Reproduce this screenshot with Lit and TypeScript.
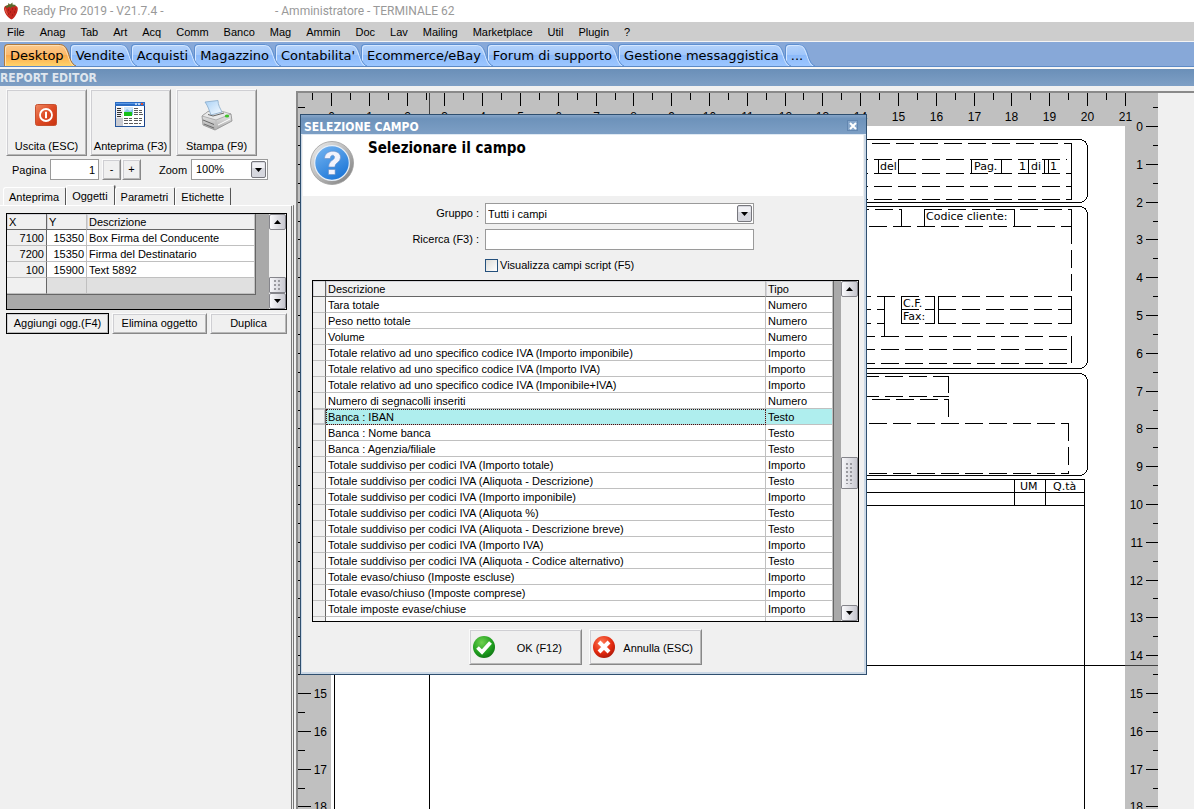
import { LitElement, html, css, svg } from "lit";
import { customElement, property, state } from "lit/decorators.js";
import { classMap } from "lit/directives/class-map.js";

const MENU = ["File", "Anag", "Tab", "Art", "Acq", "Comm", "Banco", "Mag", "Ammin", "Doc", "Lav", "Mailing", "Marketplace", "Util", "Plugin", "?"];
const TABS = ["Desktop", "Vendite", "Acquisti", "Magazzino", "Contabilita'", "Ecommerce/eBay", "Forum di supporto", "Gestione messaggistica", "..."];
const PANEL_TABS = ["Anteprima", "Oggetti", "Parametri", "Etichette"];
const OBJECTS = [
  [7100, 15350, "Box Firma del Conducente"],
  [7200, 15350, "Firma del Destinatario"],
  [100, 15900, "Text 5892"],
];
const FIELDS = [
  ["Tara totale", "Numero"],
  ["Peso netto totale", "Numero"],
  ["Volume", "Numero"],
  ["Totale relativo ad uno specifico codice IVA (Importo imponibile)", "Importo"],
  ["Totale relativo ad uno specifico codice IVA (Importo IVA)", "Importo"],
  ["Totale relativo ad uno specifico codice IVA (Imponibile+IVA)", "Importo"],
  ["Numero di segnacolli inseriti", "Numero"],
  ["Banca : IBAN", "Testo"],
  ["Banca : Nome banca", "Testo"],
  ["Banca : Agenzia/filiale", "Testo"],
  ["Totale suddiviso per codici IVA (Importo totale)", "Importo"],
  ["Totale suddiviso per codici IVA (Aliquota - Descrizione)", "Testo"],
  ["Totale suddiviso per codici IVA (Importo imponibile)", "Importo"],
  ["Totale suddiviso per codici IVA (Aliquota %)", "Testo"],
  ["Totale suddiviso per codici IVA (Aliquota - Descrizione breve)", "Testo"],
  ["Totale suddiviso per codici IVA (Importo IVA)", "Importo"],
  ["Totale suddiviso per codici IVA (Aliquota - Codice alternativo)", "Testo"],
  ["Totale evaso/chiuso (Imposte escluse)", "Importo"],
  ["Totale evaso/chiuso (Imposte comprese)", "Importo"],
  ["Totale imposte evase/chiuse", "Importo"],
  ["Totale da evadere/chiudere (Imposte escluse)", "Importo"],
];

const base = css`
  * { box-sizing: border-box; }
  button, input, select { font: inherit; color: inherit; margin: 0; border-radius: 0; }
  button { cursor: default; }
`;

/* ---------- icons ---------- */

const strawberry = html`<svg class="berry" width="16" height="18" viewBox="0 0 16 18" aria-hidden="true">
  <path d="M1 7C1 4 3 3.200 5 3.600C7 3 10 3 12 3.800C14.500 4 15.300 6 14.600 8.500C14 12 11 16.500 8.500 17.500C6.500 17 1.500 12 1 7Z" fill="#c3261d"/>
  <path d="M3 6c0 4 2 7 5 9-4-2-6-5-6-8z" fill="#e4604c"/>
  <path d="M2 4.500L5 3 5.500 1 7 2.500 9.500 0.500 9.500 2.500 13 3 11 5 9 4.500 7.500 6.500 6.500 4.600 4 6z" fill="#5a6a2c"/>
  <path d="M5 8h1M9 7h1M12 7h1M7 10h1M11 10h1M5 12h1M9 13h1" stroke="#8b120f"/>
</svg>`;

const powerIcon = html`<svg width="32" height="32" viewBox="0 0 32 32" aria-hidden="true">
  <defs><linearGradient id="pw" x1="0" y1="0" x2="1" y2="1"><stop offset="0" stop-color="#f08a63"/><stop offset=".5" stop-color="#dd4a24"/><stop offset="1" stop-color="#c93310"/></linearGradient></defs>
  <rect x="4.500" y="5.500" width="21" height="21" rx="2" fill="url(#pw)" stroke="#c6502f"/>
  <circle cx="15" cy="16" r="6" fill="none" stroke="#fff" stroke-width="1.800"/>
  <path d="M15 12.800v6.400" stroke="#fff" stroke-width="2"/>
</svg>`;

const previewIcon = html`<svg width="32" height="32" viewBox="0 0 32 32" aria-hidden="true">
  <rect x=".5" y="3.500" width="29" height="24" fill="#fff" stroke="#24559b"/>
  <path d="M0 3h30v4H0z" fill="#2a6cc4"/><path d="M1 4h28v1H1z" fill="#5c9ae6"/>
  <path d="M20 4h2v2h-2zM23 4h2v2h-2z" fill="#b9d3f3"/><path d="M26 4h2v2h-2z" fill="#e0522f"/>
  <path d="M1 8h7v11H1z" fill="#f0f0f3"/><path d="M2 9.500h4M2 11.500h4M2 13.500h5M2 15.500h4M2 17.500h4" stroke="#333"/>
  <path d="M1 19h7v8H1z" fill="#c9cbd2"/>
  <path d="M9 8h9v6h-9z" fill="#cfe6fb"/><path d="M9 13l3-3 3 2 3-2v6h-9z" fill="#8ac4e9"/><path d="M9 13h8v4h-8z" fill="#17c01a"/>
  <path d="M19 9.500h5M19 11.500h8M19 13.500h8M19 15.500h9M9 19.500h8M19 19.500h8M9 21.500h8M19 21.500h8M9 24.500h17" stroke="#5a5a5a" stroke-dasharray="4 1"/>
  <path d="M29.500 7v20" stroke="#173f86"/>
</svg>`;

const printerIcon = html`<svg width="36" height="34" viewBox="0 0 36 34" aria-hidden="true">
  <defs><linearGradient id="pp" x1="0" y1="0" x2="1" y2="1"><stop offset="0" stop-color="#a9d1f6"/><stop offset="1" stop-color="#f6fbff"/></linearGradient>
  <linearGradient id="pb" x1="0" y1="0" x2="0" y2="1"><stop offset="0" stop-color="#f4f4f4"/><stop offset="1" stop-color="#a9a9a9"/></linearGradient></defs>
  <path d="M3 17L10 12 32 15 33 22 16 31 4 26z" fill="url(#pb)" stroke="#8d8d8d" stroke-width=".8"/>
  <path d="M3 17L17 21 32 15 24 12.500 9 12.500z" fill="#e9e9e9" stroke="#9a9a9a" stroke-width=".7"/>
  <path d="M6 3L19 1.500C19 6 21 9 23 13L12 16C10 11 9 7 6 3z" fill="url(#pp)" stroke="#86a9c9" stroke-width=".8"/>
  <path d="M9 15.500l5 1.500 11-3" fill="none" stroke="#666"/>
  <path d="M17 21v9.500" stroke="#bdbdbd"/><path d="M4 21l11 4.500M5 25l10 4" stroke="#696969"/>
  <path d="M19 26l12-6" stroke="#fff"/><ellipse cx="28" cy="17" rx="2.200" ry="1.500" fill="#3fc22a"/>
</svg>`;

const helpIcon = html`<svg width="46" height="46" viewBox="0 0 46 46" aria-hidden="true">
  <defs><linearGradient id="hr" x1="0" y1="0" x2="1" y2="1"><stop offset="0" stop-color="#f2f2f2"/><stop offset=".5" stop-color="#b9b9b9"/><stop offset="1" stop-color="#777"/></linearGradient>
  <linearGradient id="hb" x1="0" y1="0" x2=".6" y2="1"><stop offset="0" stop-color="#79b7f2"/><stop offset="1" stop-color="#1f78d8"/></linearGradient></defs>
  <circle cx="23" cy="23" r="21.500" fill="url(#hr)" stroke="#9d9d9d" stroke-width=".8"/>
  <circle cx="23" cy="23" r="17.300" fill="url(#hb)" stroke="#e6eef7" stroke-width="1.200"/>
  <path d="M15.500 18.500C15.500 9 32 9 31.500 17.500C31.300 22.500 26 22.500 25.800 27H19.700C19.500 20.500 25.500 20.500 25.500 17.300C25.500 14.300 21.400 14.500 21.200 18.500z" fill="#f3f3fc" stroke="#6d8fc4" stroke-width=".6"/>
  <rect x="19.500" y="29.500" width="6.600" height="5" fill="#f3f3fc" stroke="#6d8fc4" stroke-width=".6"/>
</svg>`;

const okIcon = html`<svg width="24" height="24" viewBox="0 0 24 24" aria-hidden="true">
  <defs><radialGradient id="og" cx=".4" cy=".3" r=".8"><stop offset="0" stop-color="#6fd24f"/><stop offset=".6" stop-color="#1f9e1f"/><stop offset="1" stop-color="#0c6b12"/></radialGradient></defs>
  <circle cx="12" cy="12" r="11" fill="url(#og)"/><path d="M5.500 12.500l4.500 4.500L18.500 7.500" fill="none" stroke="#fff" stroke-width="3.800"/>
</svg>`;

const cancelIcon = html`<svg width="24" height="24" viewBox="0 0 24 24" aria-hidden="true">
  <defs><radialGradient id="cg" cx=".4" cy=".3" r=".8"><stop offset="0" stop-color="#ff7a55"/><stop offset=".6" stop-color="#e2290f"/><stop offset="1" stop-color="#9d1408"/></radialGradient></defs>
  <circle cx="12" cy="12" r="11" fill="url(#cg)"/><path d="M7 7l10 10M17 7l-10 10" stroke="#fff" stroke-width="4"/>
</svg>`;

/* ---------- scrollbar ---------- */

@customElement("rp-scrollbar")
class RpScrollbar extends LitElement {
  @property({ type: Number }) thumbStart = 0;
  @property({ type: Number }) thumbSize = 20;

  static styles = [base, css`
    :host { display: flex; flex-direction: column; width: 17px; background: #f0f0f0; }
    button { flex: none; height: 16px; padding: 0; display: grid; place-items: center; border: 1px solid #85858b; border-radius: 2px;
      background: linear-gradient(90deg, #fbfbfd, #c6c6ce); }
    .track { flex: 1; display: flex; flex-direction: column; min-height: 0; }
    .thumb { flex: none; display: grid; place-items: center; border: 1px solid #85858b; border-radius: 1px; background: linear-gradient(90deg, #f6f6f9, #c9c9d1); }
    .grip { width: 8px; height: 70%; background: radial-gradient(circle at 1px 1px, #9a9aa0 1px, transparent 1px) 0 0 / 4px 4px; }
  `];

  render() {
    return html`
      <button aria-label="Su"><svg width="7" height="4"><path d="M3.500 0L7 4H0z"/></svg></button>
      <div class="track">
        <div style="height:${this.thumbStart}%"></div>
        <div class="thumb" style="height:${this.thumbSize}px"><div class="grip"></div></div>
      </div>
      <button aria-label="Giù"><svg width="7" height="4"><path d="M0 0H7L3.500 4z"/></svg></button>`;
  }
}

/* ---------- report page with rulers ---------- */

const CM = 37.8;
const PAGE_CM = 29;
// Dashed edges: y, x of the first dash, x of the end.
const DASH_H = [
  [17, 517, 740], [33, 519, 735], [47, 519, 740], [60, 519, 740], [73, 519, 740],
  [83, 520, 570], [83, 593, 740], [100, 514, 740],
  [170, 522, 571], [183, 522, 553], [197, 522, 553],
  [170, 570, 603], [183, 570, 603], [197, 570, 603],
  [170, 607, 740], [183, 607, 740], [197, 607, 740],
  [210, 526, 740], [223, 526, 740], [237, 526, 740],
  [250, 530, 617], [270, 530, 617], [273, 517, 617],
  [297, 514, 737], [347, 514, 737],
];
// Dashed edges: x, top, bottom.
const DASH_V = [
  [740, 100, 165], [617, 250, 267], [617, 273, 291], [737, 297, 348],
];
// Solid vertical edges: x, top, bottom.
const SOLID_V = [
  [740, 17, 73], [547, 33, 47], [567, 33, 47], [640, 33, 47], [670, 33, 47], [697, 33, 47], [713, 33, 47], [717, 33, 47],
  [570, 83, 100], [593, 83, 100], [683, 83, 100], [740, 83, 100],
  [553, 170, 210], [570, 170, 197], [603, 170, 197], [607, 170, 197], [740, 170, 197], [740, 210, 236],
  [683, 353, 379], [714, 353, 379], [753, 353, 1100], [3, 353, 1100], [98, 0, 1100],
];
const LABELS: [number, number, string][] = [
  [549, 44, "del"], [643, 44, "Pag."], [688, 44, "1"], [700, 44, "di"], [719, 44, "1"],
  [595, 94, "Codice cliente:"], [572, 181, "C.F."], [572, 194, "Fax:"],
  [689, 364, "UM"], [722, 364, "Q.tà"],
];

@customElement("rp-report-canvas")
class RpReportCanvas extends LitElement {
  @state() private visibleCm = 0;

  private observer = new ResizeObserver(([entry]) => {
    this.visibleCm = Math.min(PAGE_CM, Math.floor((entry.contentRect.height - 28) / CM));
  });

  connectedCallback() {
    super.connectedCallback();
    this.observer.observe(this);
  }

  disconnectedCallback() {
    this.observer.disconnect();
    super.disconnectedCallback();
  }

  static styles = [base, css`
    :host { display: block; min-width: 0; overflow: hidden; border-top: 2px solid #8a8a8a; border-left: 2px solid #8a8a8a; }
    svg { display: block; height: 100%; }
    .ruler { fill: #c0c0c0; }
    .sheet { fill: #fff; }
    .line { stroke: #000; fill: none; }
    .dash { stroke: #000; stroke-dasharray: 18 6; }
    .guide { stroke: #404040; }
    .num { font: 12px "Liberation Sans", sans-serif; }
    .mid { text-anchor: middle; }
    .end { text-anchor: end; }
    .label { font: 11px "DejaVu Sans", sans-serif; }
  `];

  private hTick(i: number) {
    const x = Math.round((i * CM) / 2) + 0.5;
    const major = i % 2 === 0;
    return svg`<path class="line" d="M${x} -33V${major ? -20 : -26}"/>
      ${major && i >= 0 ? svg`<text class="num mid" x=${x} y="-5">${i / 2}</text>` : ""}`;
  }

  private vTick(i: number) {
    const y = Math.round((i * CM) / 2) + 0.5;
    const major = i % 2 === 0;
    return svg`<path class="line" d="M-33 ${y}H${major ? -20 : -26}M${major ? 815 : 822} ${y}H827"/>
      ${major ? svg`<text class="num end" x="-4" y=${y + 4}>${i / 2}</text><text class="num end" x="812" y=${y + 4}>${i / 2}</text>` : ""}`;
  }

  render() {
    return html`<svg width="860" shape-rendering="crispEdges" role="img" aria-label="Report">
      <rect class="ruler" width="860" height="100%"/>
      <g transform="translate(33 33)">
        <rect class="sheet" width="794" height="1120"/>
        ${Array.from({ length: 44 }, (_, k) => this.hTick(k - 1))}
        ${Array.from({ length: this.visibleCm * 2 + 2 }, (_, k) => this.vTick(k - 1))}
        <path class="guide" d="M98.500 -33V0M-33 539.500H0M794 539.500H827"/>
        ${[[13, 63], [80, 162], [247, 102]].map(([y, h]) => svg`<rect class="line" x="3.500" y=${y + 0.5} width="753" height=${h} rx="8"/>`)}
        ${DASH_H.map(([y, a, b]) => svg`<path class="dash" d="M${a} ${y + 0.5}H${b + 1}"/>`)}
        ${DASH_V.map(([x, a, b]) => svg`<path class="dash" d="M${x + 0.5} ${a}V${b}"/>`)}
        ${SOLID_V.map(([x, a, b]) => svg`<path class="line" d="M${x + 0.5} ${a}V${b + 1}"/>`)}
        <path class="line" d="M3 353.500H753M3 366.500H753M3 379.500H753M0 539.500H794"/>
        ${LABELS.map(([x, y, t]) => svg`<text class="label" x=${x} y=${y}>${t}</text>`)}
      </g>
    </svg>`;
  }
}

/* ---------- field selection dialog ---------- */

@customElement("rp-field-dialog")
class RpFieldDialog extends LitElement {
  @state() private selected = 7;

  static styles = [base, css`
    :host { display: block; border: 1px solid #2f4f6f; background: #f0f0f0; box-shadow: inset -2px -2px 0 #cbd8e6, inset 1px 0 0 #cbd8e6; }
    .title { display: flex; align-items: center; justify-content: space-between; height: 20px; padding: 5px 8px 0 3px;
      background: linear-gradient(#86a5c8, #6d92ba 20%, #7d9fc5); border-bottom: 1px solid #dfe9f3; color: #fff;
      font: bold 12px/14px "DejaVu Sans Condensed", "DejaVu Sans", sans-serif; }
    .close { width: 11px; height: 11px; margin-bottom: 3px; padding: 0; border: 1px solid #6286b0; background: #86a6ca; display: grid; place-items: center; }
    .head { display: flex; gap: 13px; height: 61px; margin: 0 3px 0 2px; padding: 5px 6px; background: #fff; }
    h1 { margin: 0; font: bold 15px/16px "DejaVu Sans Condensed", "DejaVu Sans", sans-serif; }
    .form { display: grid; grid-template-columns: 178px 269px; column-gap: 6px; row-gap: 5px; padding-top: 7px; align-items: center; }
    .form label { text-align: right; }
    .box { display: block; width: 100%; height: 21px; padding: 1px 2px 0; border: 1px solid #9a9a9a; background: #fff; appearance: none; outline: none; }
    .combo { position: relative; }
    .arrow { position: absolute; right: 2px; top: 2px; pointer-events: none; }
    .check { grid-column: 2; display: flex; align-items: center; gap: 2px; height: 21px; }
    .check input { appearance: none; width: 13px; height: 13px; border: 1px solid #24507c; background: linear-gradient(135deg, #dcdcd8, #fff); }
    .grid { display: flex; height: 342px; margin: 4px 7px 0 11px; border: 1px solid #000; background: #a9a9a9; overflow: hidden; }
    .rows { flex: 1; min-width: 0; overflow: hidden; padding-right: 7px; }
    table { width: 100%; border-collapse: separate; border-spacing: 0; table-layout: fixed; border-right: 1px solid #666; }
    th, td { height: 16px; padding: 1px 2px 0; line-height: 14px; text-align: left; font-weight: normal; white-space: nowrap; overflow: hidden;
      border-right: 1px solid #c0c0c0; border-bottom: 1px solid #c0c0c0; background: #fff; }
    th { background: #f0f0f0; border-bottom-color: #666; box-shadow: inset 1px 1px 0 #d4d4da; }
    .gutter { width: 13px; padding: 0; background: #f0f0f0; border-right-color: #666; }
    .type { width: 67px; }
    .sel td { background: #afeeee; }
    .sel td.gutter { background: #f0f0f0; box-shadow: inset 0 0 0 1px #c4c4c8; }
    .sel td.name { outline: 1px dotted #401010; outline-offset: -1px; }
    .actions { display: flex; justify-content: center; gap: 7px; padding: 7px 0 9px 4px; }
    .act { display: flex; align-items: center; width: 113px; height: 36px; padding: 0 8px 0 2px; border: 1px solid #fafafa; border-right: 1px solid #888; border-bottom: 1px solid #888;
      background: #f0f0f0; box-shadow: inset 1px 1px 0 #cfcfd3, inset -1px -1px 0 #b8b8b8; }
    .act span { flex: 1; text-align: right; padding-top: 3px; }
    .act.ok { padding-right: 19px; }
    .act svg { flex: none; }
  `];

  render() {
    return html`
      <div class="title"><span>SELEZIONE CAMPO</span>
        <button class="close" aria-label="Chiudi"><svg width="8" height="8"><path d="M1 1l6 6M7 1L1 7" stroke="#fff" stroke-width="2"/></svg></button></div>
      <div class="head">${helpIcon}<h1>Selezionare il campo</h1></div>
      <div class="form">
        <label for="gruppo">Gruppo :</label>
        <div class="combo"><select id="gruppo" class="box"><option>Tutti i campi</option></select>${comboArrow}</div>
        <label for="ricerca">Ricerca (F3) :</label>
        <input id="ricerca" class="box" type="text">
        <div class="check"><input id="script" type="checkbox"><label for="script">Visualizza campi script (F5)</label></div>
      </div>
      <div class="grid">
        <div class="rows"><table>
          <thead><tr><th class="gutter"></th><th>Descrizione</th><th class="type">Tipo</th></tr></thead>
          <tbody>${FIELDS.map(([name, type], i) => html`
            <tr class=${classMap({ sel: i === this.selected })} @click=${() => (this.selected = i)}>
              <td class="gutter"></td><td class="name">${name}</td><td>${type}</td></tr>`)}
          </tbody></table></div>
        <rp-scrollbar .thumbStart=${52} .thumbSize=${32}></rp-scrollbar>
      </div>
      <div class="actions">
        <button class="act ok">${okIcon}<span>OK (F12)</span></button>
        <button class="act">${cancelIcon}<span>Annulla (ESC)</span></button>
      </div>`;
  }
}

const comboArrow = html`<svg class="arrow" width="15" height="17" viewBox="0 0 15 17" aria-hidden="true">
  <rect x=".5" y=".5" width="14" height="16" rx="1.500" fill="#d6d7de" stroke="#77777d"/>
  <path d="M1.500 2h12v5h-12z" fill="#f1f1f5"/><path d="M4 7h7l-3.500 4z"/></svg>`;

/* ---------- application shell ---------- */

@customElement("app-root")
class AppRoot extends LitElement {
  @state() private tab = 0;
  @state() private panelTab = 1;

  static styles = [base, css`
    :host { display: flex; flex-direction: column; height: 100vh; overflow: hidden; position: relative; background: #f0f0f0; color: #000;
      font: 11px/15px "Liberation Sans", sans-serif; }
    .caption { flex: none; display: flex; align-items: center; height: 22px; padding-left: 3px; background: #fff; color: #999; font: 12px/16px Roboto, sans-serif; }
    .caption span { width: 256px; padding-left: 4px; }
    .caption .user { padding: 0; width: auto; }
    .menu { flex: none; display: flex; align-items: center; height: 20px; background: #cdcdcd; border-bottom: 1px solid #f4f4f4; }
    .menu button { padding: 1px 8px 0 7px; border: 0; background: none; }
    .tabs { flex: none; display: flex; height: 25px; padding: 2px 0 0 4px; background: #87a8d8; border-bottom: 1px solid #5d8ac6; }
    .tab { position: relative; isolation: isolate; flex: none; padding: 0 6px; border: 0; background: none; font: 13px/21px "DejaVu Sans", sans-serif; }
    .tab::before { content: ""; position: absolute; z-index: -1; inset: 0 11px 0 0; border: 1px solid #5e8fd0; border-width: 1px 0 0 1px; border-radius: 4px 0 0 0;
      background: linear-gradient(#b5d3fa, #9ec5fb 50%, #8cbafa 50%, #9cc6ff); box-shadow: inset 1px 1px 0 #d5e7ff; }
    .tab svg { position: absolute; z-index: -1; right: -6px; top: 0; }
    .tab .fill { fill: url(#tabBlue); }
    .tab .edge { fill: none; stroke: #5e8fd0; }
    .tab .shine { fill: none; stroke: #d5e7ff; }
    .tab.on::before { border-color: #b07a3c; background: linear-gradient(#fbc98c, #fdb868 50%, #fba94b 50%, #ffd36b); box-shadow: inset 1px 1px 0 #ffe0b4; }
    .tab.on .fill { fill: url(#tabOrange); }
    .tab.on .edge { stroke: #9a6b3a; }
    .tab.on .shine { stroke: #ffe0b4; }
    .heading { flex: none; height: 19px; margin: 0; border-top: 2px solid #f6f6f6; background: linear-gradient(#6a8fb8, #7e9fc5); color: #dfe6ee;
      font: bold 12px/19px "DejaVu Sans Condensed", "DejaVu Sans", sans-serif; }
    .work { flex: 1; min-height: 0; display: flex; padding-top: 5px; gap: 2px; }
    .side { flex: none; width: 294px; display: flex; flex-direction: column; }
    .big { display: flex; gap: 3px; height: 67px; padding-left: 6px; margin-top: -2px; }
    .raised { border: 1px solid #fafafa; border-right-color: #888; border-bottom-color: #888; background: #f0f0f0; padding: 0;
      box-shadow: inset 1px 1px 0 #cfcfd3, inset -1px -1px 0 #b8b8b8; }
    .big button { display: flex; flex-direction: column; align-items: center; justify-content: space-between; width: 81px; padding: 9px 0 1px; }
    .big .gap { margin-left: 2px; }
    .row { display: flex; align-items: center; padding: 3px 0 0 12px; }
    .row label { width: 38px; padding-top: 1px; }
    .row .zoom { width: 32px; margin-left: 17px; }
    .box { height: 21px; border: 1px solid #9a9a9a; background: #fff; padding: 0 3px; appearance: none; outline: none; }
    .page { width: 49px; margin-right: 3px; text-align: right; }
    .step { width: 19px; height: 21px; margin-right: 1px; }
    .combo { position: relative; width: 77px; }
    .combo select { display: block; width: 100%; padding-left: 4px; }
    .arrow { position: absolute; right: 2px; top: 2px; pointer-events: none; }
    .ptabs { display: flex; align-items: flex-end; height: 25px; padding-left: 3px; }
    .ptabs button { height: 18px; padding: 1px 6px 0 5px; border: 1px solid #fff; border-right: 1px solid #555; border-bottom: 0; border-radius: 3px 2px 0 0; background: #f0f0f0; }
    .ptabs button.on { height: 21px; margin-bottom: -1px; padding-bottom: 1px; box-shadow: 1px 0 0 #999; border-radius: 2px; }
    .panel { flex: 1; padding: 7px 4px 0 6px; border-top: 1px solid #fff; border-right: 3px double #777; }
    .objects { display: flex; height: 97px; border: 1px solid #000; background: #a9a9a9; }
    .objects .rows { flex: 1; padding-right: 13px; }
    table { width: 100%; border-collapse: separate; border-spacing: 0; table-layout: fixed; border-right: 1px solid #666; border-bottom: 1px solid #666; }
    th, td { height: 16px; padding: 1px 2px 0; line-height: 14px; font-weight: normal; text-align: left; white-space: nowrap; border-right: 1px solid #c0c0c0; border-bottom: 1px solid #c0c0c0; background: #fff; }
    th { background: #f0f0f0; border-bottom-color: #666; box-shadow: inset 1px 1px 0 #d4d4da; }
    .num { text-align: right; }
    .colx { width: 40px; background: #f0f0f0; border-right-color: #666; }
    .coly { width: 40px; }
    .blank td { background: #e0e0e0; }
    .blank td.colx { background: #f0f0f0; }
    .btns { display: grid; grid-template-columns: 103px 95px 77px; gap: 3px; padding-top: 3px; }
    .btns button { height: 21px; }
    .btns .default { border-color: #000; }
    rp-report-canvas { flex: 1; }
    rp-field-dialog { position: absolute; left: 300px; top: 114px; width: 567px; }
    .defs { position: absolute; width: 0; height: 0; }
  `];

  render() {
    return html`
      <svg class="defs" aria-hidden="true"><defs>
        <linearGradient id="tabBlue" x1="0" y1="0" x2="0" y2="1"><stop offset="0" stop-color="#b5d3fa"/><stop offset=".5" stop-color="#9ec5fb"/><stop offset=".5" stop-color="#8cbafa"/><stop offset="1" stop-color="#9cc6ff"/></linearGradient>
        <linearGradient id="tabOrange" x1="0" y1="0" x2="0" y2="1"><stop offset="0" stop-color="#fbc98c"/><stop offset=".5" stop-color="#fdb868"/><stop offset=".5" stop-color="#fba94b"/><stop offset="1" stop-color="#ffd36b"/></linearGradient>
      </defs></svg>
      <div class="caption">${strawberry}<span>Ready Pro 2019 - V21.7.4 -</span><span class="user">- Amministratore - TERMINALE 62</span></div>
      <nav class="menu">${MENU.map((m) => html`<button>${m}</button>`)}</nav>
      <nav class="tabs">${TABS.map((t, i) => html`
        <button class=${classMap({ tab: true, on: i === this.tab })} style="z-index:${TABS.length - i}" @click=${() => (this.tab = i)}>${t}
          <svg width="17" height="22" viewBox="0 0 17 22" aria-hidden="true">
            <path class="fill" d="M0 0C5 0 7 3 9 8C11 14 12 20 17 22H0z"/>
            <path class="shine" d="M0 1.500C5 1.500 6 4 8 9C10 14 11 20 15 22"/>
            <path class="edge" d="M0 .5C5 .5 7 3 9 8C11 14 12 20 17 22"/></svg>
        </button>`)}</nav>
      <h2 class="heading">REPORT EDITOR</h2>
      <main class="work">
        <section class="side">
          <div class="big">
            <button class="raised">${powerIcon}<span>Uscita (ESC)</span></button>
            <button class="raised">${previewIcon}<span>Anteprima (F3)</span></button>
            <button class="raised gap">${printerIcon}<span>Stampa (F9)</span></button>
          </div>
          <div class="row">
            <label for="page">Pagina</label><input id="page" class="box page" type="text" .value=${"1"}>
            <button class="raised step">-</button><button class="raised step">+</button>
            <label class="zoom" for="zoom">Zoom</label>
            <div class="combo"><select id="zoom" class="box"><option>100%</option></select>${comboArrow}</div>
          </div>
          <div class="ptabs">${PANEL_TABS.map((t, i) => html`<button class=${classMap({ on: i === this.panelTab })} @click=${() => (this.panelTab = i)}>${t}</button>`)}</div>
          <div class="panel">
            <div class="objects">
              <div class="rows"><table>
                <thead><tr><th class="colx">X</th><th class="coly">Y</th><th>Descrizione</th></tr></thead>
                <tbody>${OBJECTS.map(([x, y, d]) => html`<tr><td class="num colx">${x}</td><td class="num">${y}</td><td>${d}</td></tr>`)}
                  <tr class="blank"><td class="colx"></td><td></td><td></td></tr></tbody>
              </table></div>
              <rp-scrollbar .thumbStart=${74} .thumbSize=${16}></rp-scrollbar>
            </div>
            <div class="btns">
              <button class="raised default">Aggiungi ogg.(F4)</button>
              <button class="raised">Elimina oggetto</button>
              <button class="raised">Duplica</button>
            </div>
          </div>
        </section>
        <rp-report-canvas></rp-report-canvas>
      </main>
      <rp-field-dialog></rp-field-dialog>`;
  }
}
